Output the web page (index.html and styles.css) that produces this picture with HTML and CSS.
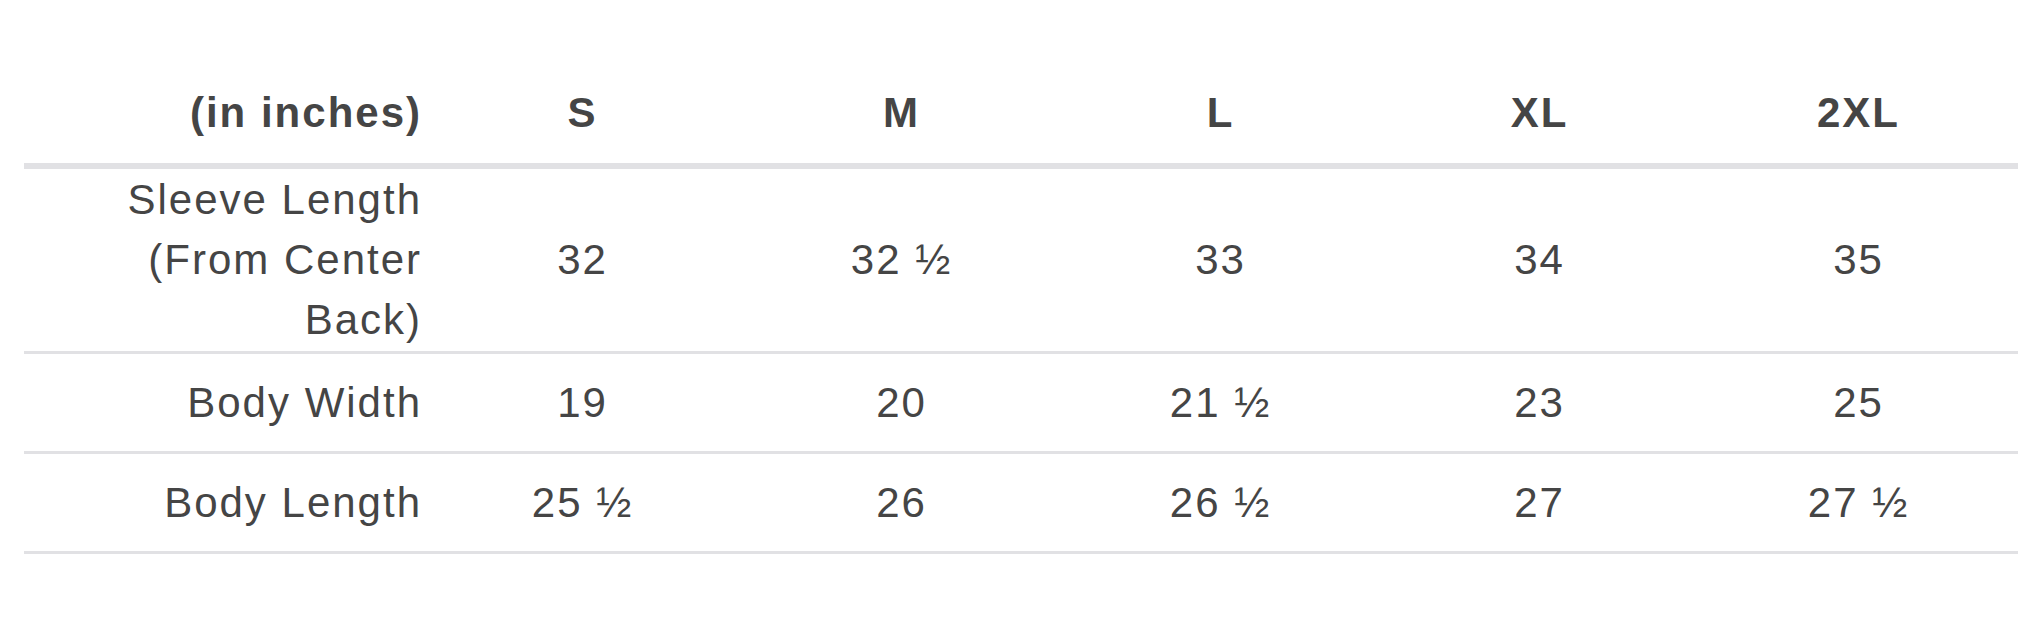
FILE: index.html
```html
<!DOCTYPE html>
<html lang="en">
<head>
<meta charset="utf-8">
<title>Size chart</title>
<link rel="stylesheet" href="styles.css">
</head>
<body>
<div class="wrap">
  <table class="chart">
    <colgroup>
      <col class="c-label">
      <col class="c-size"><col class="c-size"><col class="c-size"><col class="c-size"><col class="c-size">
    </colgroup>
    <thead>
      <tr>
        <th class="label">(in inches)</th>
        <th>S</th><th>M</th><th>L</th><th>XL</th><th>2XL</th>
      </tr>
    </thead>
    <tbody>
      <tr>
        <td class="label">Sleeve Length<br>(From Center<br>Back)</td>
        <td>32</td><td>32 ½</td><td>33</td><td>34</td><td>35</td>
      </tr>
      <tr>
        <td class="label">Body Width</td>
        <td>19</td><td>20</td><td>21 ½</td><td>23</td><td>25</td>
      </tr>
      <tr>
        <td class="label">Body Length</td>
        <td>25 ½</td><td>26</td><td>26 ½</td><td>27</td><td>27 ½</td>
      </tr>
    </tbody>
  </table>
</div>
</body>
</html>
```

FILE: styles.css
```css
html, body {
  margin: 0;
  padding: 0;
  background: #ffffff;
}

.wrap {
  padding: 66px 18px 0 24px;
}

.chart {
  width: 1994px;
  table-layout: fixed;
  border-collapse: separate;
  border-spacing: 0;
  font-family: "Liberation Sans", Arial, sans-serif;
  font-size: 42px;
  line-height: 60px;
  letter-spacing: 2px;
  color: #454545;
}

.c-label { width: 399px; }
.c-size { width: 319px; }

.chart th {
  font-weight: bold;
  text-align: center;
  padding: 17px 1px 20px;
  border-bottom: 6px solid #e1e1e4;
  vertical-align: middle;
}

.chart td {
  text-align: center;
  vertical-align: middle;
  padding: 1px;
  height: 95px;
  border-bottom: 3px solid #e1e1e4;
}

.chart .label {
  text-align: right;
}
```
